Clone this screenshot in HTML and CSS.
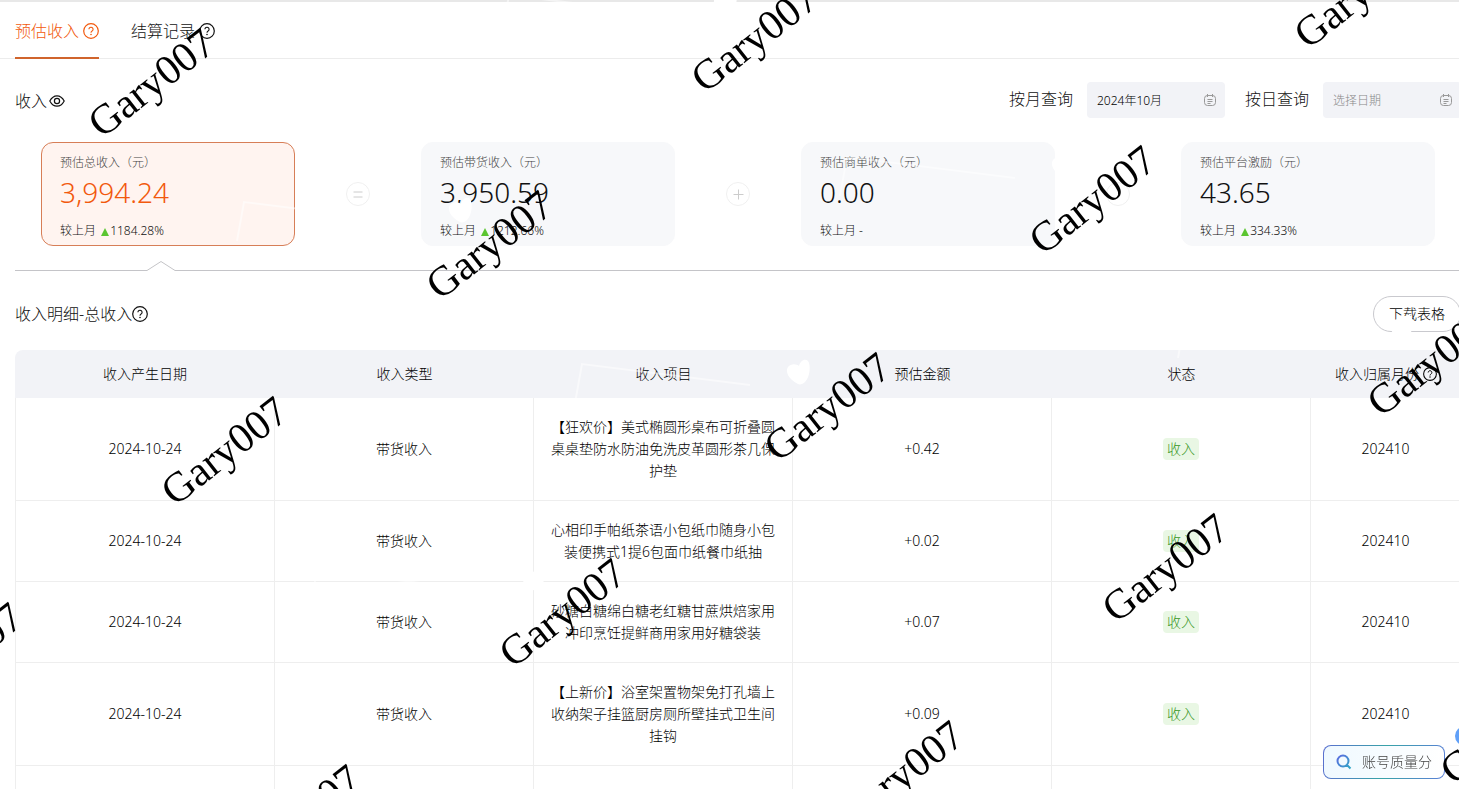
FILE: index.html
```html
<!DOCTYPE html>
<html lang="zh-CN">
    <head>
        <meta charset="utf-8">
        <title>预估收入</title>
        <link rel="stylesheet" href="styles.css">
    </head>
    <body>
        <!-- Shared icons -->
        <svg class="defs" aria-hidden="true">
            <symbol id="icon-help" viewBox="0 0 16 16">
                <circle cx="8" cy="8" r="7.3" fill="none" stroke="currentColor" stroke-width="1.2"/>
                <path d="M5.9 6.3a2.1 2.1 0 1 1 3.2 1.8c-.7.4-1.1.8-1.1 1.6" fill="none" stroke="currentColor" stroke-width="1.1"/>
                <circle cx="8" cy="11.5" r=".8" fill="currentColor"/>
            </symbol>
            <symbol id="icon-eye" viewBox="0 0 16 16">
                <path d="M.8 8C2.6 4.6 5 2.8 8 2.8S13.4 4.6 15.2 8C13.4 11.4 11 13.2 8 13.2S2.6 11.4.8 8z" fill="none" stroke="currentColor" stroke-width="1.2"/>
                <circle cx="8" cy="8" r="2.6" fill="none" stroke="currentColor" stroke-width="1.2"/>
            </symbol>
            <symbol id="icon-date" viewBox="0 0 14 14">
                <rect x="1.5" y="2.5" width="11" height="10" rx="3" fill="none" stroke="currentColor"/>
                <path d="M4.5 1v3M9.5 1v3M4.5 6.5h5M4.500 8.500h5M4.500 10.500h3" fill="none" stroke="currentColor"/>
            </symbol>
            <symbol id="mark-art" viewBox="-200 -100 260 120" overflow="visible">
                <path d="M32-73C22-78 19-86 22-90C25-94 31-93 33-91C34-96 39-99 42-96C45-92 44-80 39-75C37-73 34-72 32-73z" fill="#fff"/>
                <path d="M-191-54L-184-93L-16-72" fill="none" stroke="#fff" stroke-width="2" opacity=".5"/>
            </symbol>
        </svg>

        <div class="page">
            <nav class="tabs">
                <a href="#estimate" class="tab active">预估收入<svg class="icon"><use href="#icon-help"/></svg></a>
                <a href="#settled" class="tab">结算记录<svg class="icon"><use href="#icon-help"/></svg></a>
            </nav>

            <div class="filters">
                <h2 class="title">收入<svg class="icon eye"><use href="#icon-eye"/></svg></h2>
                <div class="field">
                    <label for="month">按月查询</label>
                    <div class="date">
                        <input type="text" id="month" value="2024年10月">
                        <svg class="icon-small"><use href="#icon-date"/></svg>
                    </div>
                </div>
                <div class="field">
                    <label for="day">按日查询</label>
                    <div class="date">
                        <input type="text" id="day" placeholder="选择日期">
                        <svg class="icon-small"><use href="#icon-date"/></svg>
                    </div>
                </div>
            </div>

            <div class="cards">
                <div class="card selected">
                    <div class="card-name">预估总收入（元）</div>
                    <div class="card-value">3,994.24</div>
                    <div class="card-diff">较上月 <i class="up"></i>1184.28%</div>
                </div>
                <div class="operator"><svg viewBox="0 0 24 24"><circle cx="12" cy="12" r="11.5"/><path d="M7.5 10h9M7.5 15h9"/></svg></div>
                <div class="card">
                    <div class="card-name">预估带货收入（元）</div>
                    <div class="card-value">3,950.59</div>
                    <div class="card-diff">较上月 <i class="up"></i>1212.66%</div>
                </div>
                <div class="operator"><svg viewBox="0 0 24 24"><circle cx="12" cy="12" r="11.5"/><path d="M7.5 12.5h10M12.5 7.5v10"/></svg></div>
                <div class="card">
                    <div class="card-name">预估商单收入（元）</div>
                    <div class="card-value">0.00</div>
                    <div class="card-diff">较上月 -</div>
                </div>
                <div class="operator"><svg viewBox="0 0 24 24"><circle cx="12" cy="12" r="11.5"/></svg></div>
                <div class="card">
                    <div class="card-name">预估平台激励（元）</div>
                    <div class="card-value">43.65</div>
                    <div class="card-diff">较上月 <i class="up"></i>334.33%</div>
                </div>
            </div>

            <div class="divider">
                <svg viewBox="0 0 30 10"><path d="M0 9.5h1L15 .5L29 9.5h1"/></svg>
            </div>

            <div class="detail-head">
                <h2 class="title">收入明细-总收入<svg class="icon"><use href="#icon-help"/></svg></h2>
                <button type="button" class="download">下载表格</button>
            </div>

            <table class="detail">
                <thead>
                    <tr>
                        <th>收入产生日期</th>
                        <th>收入类型</th>
                        <th>收入项目</th>
                        <th>预估金额</th>
                        <th>状态</th>
                        <th class="last">收入归属月份<svg class="icon-small"><use href="#icon-help"/></svg></th>
                    </tr>
                </thead>
                <tbody>
                    <tr>
                        <td>2024-10-24</td>
                        <td>带货收入</td>
                        <td>【狂欢价】美式椭圆形桌布可折叠圆桌桌垫防水防油免洗皮革圆形茶几保护垫</td>
                        <td>+0.42</td>
                        <td><span class="tag">收入</span></td>
                        <td>202410</td>
                    </tr>
                    <tr>
                        <td>2024-10-24</td>
                        <td>带货收入</td>
                        <td>心相印手帕纸茶语小包纸巾随身小包装便携式1提6包面巾纸餐巾纸抽</td>
                        <td>+0.02</td>
                        <td><span class="tag">收入</span></td>
                        <td>202410</td>
                    </tr>
                    <tr>
                        <td>2024-10-24</td>
                        <td>带货收入</td>
                        <td>砂糖白糖绵白糖老红糖甘蔗烘焙家用冲印烹饪提鲜商用家用好糖袋装</td>
                        <td>+0.07</td>
                        <td><span class="tag">收入</span></td>
                        <td>202410</td>
                    </tr>
                    <tr>
                        <td>2024-10-24</td>
                        <td>带货收入</td>
                        <td>【上新价】浴室架置物架免打孔墙上收纳架子挂篮厨房厕所壁挂式卫生间挂钩</td>
                        <td>+0.09</td>
                        <td><span class="tag">收入</span></td>
                        <td>202410</td>
                    </tr>
                    <tr class="next">
                        <td></td>
                        <td></td>
                        <td></td>
                        <td></td>
                        <td></td>
                        <td></td>
                    </tr>
                </tbody>
            </table>
        </div>

        <div class="bubble"></div>
        <button type="button" class="quality">
            <svg viewBox="0 0 16 16">
                <defs>
                    <linearGradient id="lens" x1="0" y1="0" x2="1" y2="1">
                        <stop offset="0" stop-color="#5b6be0"/>
                        <stop offset="1" stop-color="#2fa8c4"/>
                    </linearGradient>
                </defs>
                <path d="M12.5 7a5.5 5.5 0 1 1-11 0a5.5 5.5 0 0 1 11 0zM11 11L14.5 14.5" fill="none" stroke="url(#lens)" stroke-width="2"/>
            </svg>
            账号质量分
        </button>

        <!-- Watermark, repeated on a slanted grid -->
        <svg class="watermark" aria-hidden="true">
            <g transform="translate(90 133)"><text>Gary007</text></g>
            <g transform="translate(428 295)"><use href="#mark-art" x="-200" y="-100" width="260" height="120"/><text>Gary007</text></g>
            <g transform="translate(766 457)"><use href="#mark-art" x="-200" y="-100" width="260" height="120"/><text>Gary007</text></g>
            <g transform="translate(1104 618)"><text>Gary007</text></g>
            <g transform="translate(1442 780)"><text>Gary007</text></g>
            <g transform="translate(693 88)"><use href="#mark-art" x="-200" y="-100" width="260" height="120"/><text>Gary007</text></g>
            <g transform="translate(1031 250)"><use href="#mark-art" x="-200" y="-100" width="260" height="120"/><text>Gary007</text></g>
            <g transform="translate(1369 412)"><use href="#mark-art" x="-200" y="-100" width="260" height="120"/><text>Gary007</text></g>
            <g transform="translate(1296 44)"><text>Gary007</text></g>
            <g transform="translate(163 501)"><text>Gary007</text></g>
            <g transform="translate(501 663)"><use href="#mark-art" x="-200" y="-100" width="260" height="120"/><text>Gary007</text></g>
            <g transform="translate(839 825)"><text>Gary007</text></g>
            <g transform="translate(-102 707)"><text>Gary007</text></g>
            <g transform="translate(236 869)"><text>Gary007</text></g>
        </svg>
    </body>
</html>
```
FILE: styles.css
```css
* {
    box-sizing: border-box;
}

body {
    margin: 0;
    height: 100vh;
    overflow: hidden;
    font-family: "Noto Sans", "Noto Sans CJK SC", sans-serif;
    font-size: 14px;
    font-weight: 300;
    line-height: 22px;
    color: #111;
    background-color: #fff;
}

input, button {
    font: inherit;
    color: inherit;
}

.defs {
    position: absolute;
    width: 0;
    height: 0;
}

.icon {
    width: 16px;
    height: 16px;
}

.icon-small {
    width: 14px;
    height: 14px;
}

/* The content is a touch wider than the window */
.page {
    height: 100%;
    margin-right: -2px;
    overflow: hidden;
    border-top: 2px solid #e8e8e8;
}

.tabs {
    display: flex;
    gap: 32px;
    height: 57px;
    padding-left: 15px;
    border-bottom: 1px solid #ececec;
}

.tab {
    display: flex;
    align-items: center;
    gap: 4px;
    height: 57px;
    padding-top: 2px;
    border-bottom: 2px solid transparent;
    font-size: 16px;
    color: #111;
    text-decoration: none;
}

.tab.active {
    color: #f2590d;
    border-color: #d0642c;
}

.title {
    display: flex;
    align-items: center;
    margin: 0;
    font-size: 16px;
    font-weight: 300;
}

.eye {
    margin-left: 2px;
}

.filters {
    display: flex;
    align-items: center;
    gap: 20px;
    margin-top: 23px;
    padding-left: 15px;
}

.filters .title {
    margin-right: auto;
    padding-top: 2px;
}

.field {
    display: flex;
    align-items: center;
    gap: 14px;
    font-size: 16px;
}

.field label {
    padding-bottom: 2px;
}

.date {
    display: flex;
    align-items: center;
    width: 138px;
    height: 36px;
    padding: 0 8px 0 10px;
    border-radius: 4px;
    background-color: #f2f3f7;
    color: #999;
}

.date input {
    flex: 1;
    min-width: 0;
    padding: 2px 0 0;
    border: none;
    outline: none;
    background: none;
    font-size: 12px;
    color: #000;
}

.date input::placeholder {
    color: #888;
    opacity: 1;
}

/* Income cards */
.cards {
    display: flex;
    margin-top: 24px;
    padding: 0 26px 0 41px;
}

.card {
    flex: 1;
    height: 104px;
    padding: 9px 18px;
    border: 1px solid #f7f8fa;
    border-radius: 12px;
    background-color: #f7f8fa;
}

.card.selected {
    border-color: #d77e57;
    background-color: #fff4f0;
}

.card-name {
    font-size: 12px;
    color: #444;
}

.card-value {
    font-size: 28px;
    line-height: 36px;
}

.selected .card-value {
    color: #f2590d;
}

.card-diff {
    margin-top: 10px;
    font-size: 12px;
}

.up {
    display: inline-block;
    margin: 0 1px -1px 2px;
    border: 4px solid transparent;
    border-top: none;
    border-bottom: 8px solid #5bc531;
}

.operator {
    display: flex;
    align-items: center;
    justify-content: center;
    width: 126px;
}

.operator svg {
    width: 24px;
    height: 24px;
    fill: none;
    stroke: #ccc;
}

.operator circle {
    stroke: #f0f0f0;
}

.divider {
    height: 10px;
    margin: 15px 0 0 15px;
    background: linear-gradient(#c4c4c8, #c4c4c8) 0 100% / 100% 1px no-repeat;
}

.divider svg {
    display: block;
    width: 30px;
    height: 10px;
    margin-left: 131px;
    background-color: #fff;
    fill: none;
    stroke: #c4c4c8;
}

.detail-head {
    display: flex;
    align-items: center;
    justify-content: space-between;
    margin: 25px 0 18px;
    padding-left: 15px;
}

.download {
    height: 36px;
    padding: 0 15px;
    border: 1px solid #c9c9ce;
    border-radius: 18px;
    background-color: #fff;
    color: #000;
}

/* Detail table */
.detail {
    width: calc(100% - 15px);
    margin-left: 15px;
    border-collapse: separate;
    border-spacing: 0;
    table-layout: fixed;
    text-align: center;
    color: #000;
}

.detail th {
    width: 259px;
    height: 48px;
    padding: 0;
    background-color: #f2f3f7;
    font-weight: 300;
}

.detail th:first-child {
    width: 260px;
    border-radius: 8px 0 0 0;
}

.detail th.last {
    width: auto;
}

.detail th svg {
    margin-left: 4px;
    vertical-align: -2px;
}

.detail td {
    padding: 18px 16px;
    border-right: 1px solid #eee;
    border-bottom: 1px solid #eee;
}

.detail td:first-child {
    border-left: 1px solid #eee;
}

.detail .next td {
    height: 81px;
}

.tag {
    display: inline-block;
    padding: 0 4px;
    border-radius: 4px;
    background-color: #e9f7e4;
    color: #36961c;
}

/* Floating button over the table */
.quality {
    position: fixed;
    right: 14px;
    bottom: 10px;
    display: flex;
    align-items: center;
    gap: 10px;
    height: 34px;
    padding: 0 12px;
    border: 1px solid transparent;
    border-radius: 8px;
    background: linear-gradient(90deg, #eff9ff, #fff) padding-box, linear-gradient(100deg, #5b6fd0, #38a3a8, #5b7fd8) border-box;
    color: #444;
}

.quality svg {
    width: 16px;
    height: 16px;
}

.bubble {
    position: fixed;
    right: -16px;
    bottom: 43px;
    width: 20px;
    height: 20px;
    border-radius: 50%;
    background-color: #60a0f8;
}

.watermark {
    position: fixed;
    top: 0;
    left: 0;
    width: 100%;
    height: 100%;
    pointer-events: none;
}

.watermark text {
    font-family: "Liberation Serif", serif;
    font-size: 42px;
    font-weight: 400;
    transform: translate(12px, 6px) rotate(-38deg);
}
```
